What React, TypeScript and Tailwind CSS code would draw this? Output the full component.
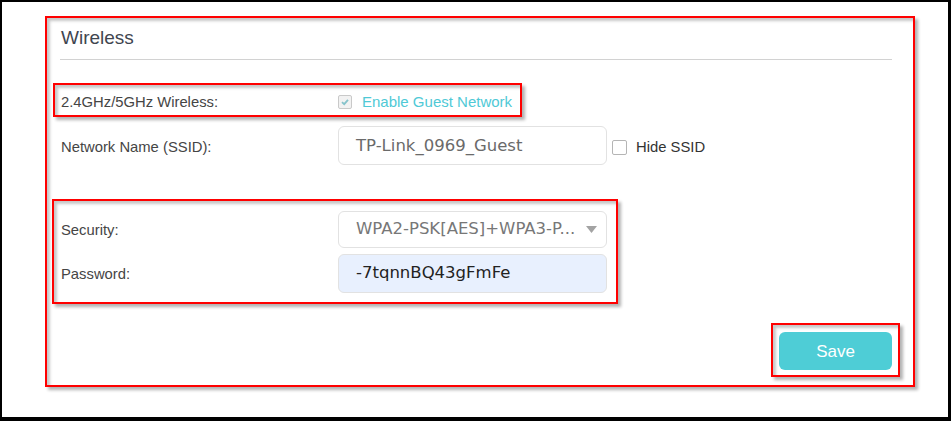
import React from "react";

const redBox =
  "border-2 border-[#ff0000] shadow-[3px_3px_3px_rgba(0,0,0,0.3),inset_3px_3px_3px_rgba(0,0,0,0.22)]";

const Label = ({ children, className = "" }: { children: React.ReactNode; className?: string }) => (
  <div className={"w-[277px] shrink-0 text-[14.8px] leading-[18px] text-[#454545] " + className}>{children}</div>
);

const Field = ({ children, className = "" }: { children: React.ReactNode; className?: string }) => (
  <div
    className={
      "w-[269px] flex items-center border border-[#e2e2e2] rounded-[6px] px-[17px] text-[16.5px] font-['DejaVu_Sans',sans-serif] " +
      className
    }
  >
    {children}
  </div>
);

const App = () => {
  return (
    <div className="w-[951px] h-[421px] bg-white border-l-2 border-t-2 border-r-[3px] border-b-[4px] border-black pl-[43px] pt-[14px] font-['Liberation_Sans',Arial,sans-serif]">
      <div className={"w-[870px] h-[371px] flex flex-col " + redBox}>
        <div className="pl-[14px] pt-[9px] text-[19px] leading-[22px] text-[#3f4650]">Wireless</div>
        <div className="mt-[10px] ml-[13px] mr-[21px] h-px bg-[#d2d2d2]" />

        {/* guest network toggle */}
        <div className={"mt-[23px] ml-[6px] w-[469px] h-[34px] flex items-center pl-[6px] pt-[4px] " + redBox}>
          <Label>2.4GHz/5GHz Wireless:</Label>
          <div className="flex items-center">
            <div className="w-[14px] h-[14px] rounded-[2px] border border-[#c9c9c9] bg-[#f2f2f2] flex items-center justify-center">
              <svg width="10" height="10" viewBox="0 0 10 10">
                <path d="M2 5.2 L4.2 7.2 L8 2.8" fill="none" stroke="#86c3cb" strokeWidth="1.8" />
              </svg>
            </div>
            <span className="ml-[10px] text-[15px] text-[#4fc9d6]">Enable Guest Network</span>
          </div>
        </div>

        <div className="mt-[9px] h-[39px] flex items-center pl-[14px]">
          <Label className="pt-[3px]">Network Name (SSID):</Label>
          <Field className="h-[39px] pt-[2px] text-[#6a6a6a]">TP-Link_0969_Guest</Field>
          <div className="ml-[5px] mt-[3px] w-[15px] h-[15px] rounded-[2px] border border-[#b5b5b5] bg-white" />
          <span className="ml-[9px] pt-[3px] text-[14.8px] text-[#333]">Hide SSID</span>
        </div>

        {/* security */}
        <div className={"mt-[34px] ml-[5px] w-[566px] h-[105px] flex flex-col pl-[7px] pt-[10px] " + redBox}>
          <div className="h-[37px] flex items-center">
            <Label>Security:</Label>
            <Field className="h-[37px] justify-between pr-[9px] text-[#777]">
              <span>WPA2-PSK[AES]+WPA3-P...</span>
              <svg width="11" height="7" viewBox="0 0 11 7">
                <path d="M0 0 L11 0 L5.5 7 Z" fill="#a3a3a3" />
              </svg>
            </Field>
          </div>
          <div className="mt-[6px] h-[39px] flex items-center">
            <Label>Password:</Label>
            <Field className="h-[39px] bg-[#e8f0fe] text-[#222]">-7tqnnBQ43gFmFe</Field>
          </div>
        </div>

        <div className="mt-[19px] self-end mr-[13px]">
          <div className={"w-[129px] h-[54px] pt-[7px] pl-[6px] " + redBox}>
            <button className="w-[113px] h-[38px] rounded-[6px] bg-[#4ecdd6] text-white text-[17px] pt-[2px]">Save</button>
          </div>
        </div>
      </div>
    </div>
  );
};

export default App;
